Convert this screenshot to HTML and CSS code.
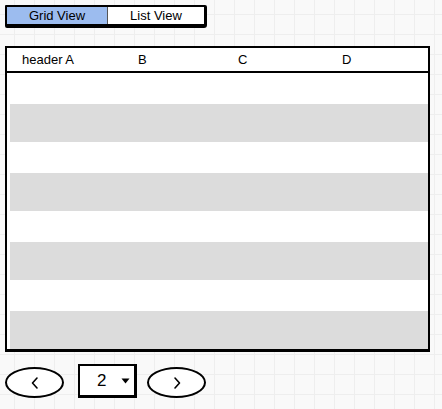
FILE: index.html
```html
<!DOCTYPE html>
<html>
<head>
<meta charset="utf-8">
<link rel="stylesheet" href="styles.css">
</head>
<body>
<div class="page">
  <div class="tabs">
    <div class="tab active">Grid View</div>
    <div class="tab">List View</div>
  </div>

  <div class="table">
    <div class="thead">
      <div class="th">header A</div>
      <div class="th">B</div>
      <div class="th">C</div>
      <div class="th">D</div>
    </div>
    <div class="tbody">
      <div class="row"></div>
      <div class="row alt"></div>
      <div class="row"></div>
      <div class="row alt"></div>
      <div class="row"></div>
      <div class="row alt"></div>
      <div class="row"></div>
      <div class="row alt"></div>
    </div>
  </div>

  <div class="pager">
    <div class="pill">
      <svg width="10" height="14" viewBox="0 0 10 14"><polyline points="7,2 2.5,7 7,12" fill="none" stroke="#000" stroke-width="1.6" stroke-linecap="round" stroke-linejoin="round"/></svg>
    </div>
    <div class="select">
      <span class="num">2</span>
      <svg width="9" height="6" viewBox="0 0 9 6"><polygon points="0.5,0.5 8.5,0.5 4.5,5.5" fill="#000"/></svg>
    </div>
    <div class="pill">
      <svg width="10" height="14" viewBox="0 0 10 14"><polyline points="3,2 7.5,7 3,12" fill="none" stroke="#000" stroke-width="1.6" stroke-linecap="round" stroke-linejoin="round"/></svg>
    </div>
  </div>
</div>
</body>
</html>
```
FILE: styles.css
```css
html {
  background-color: #f9f9f9;
  background-image:
    linear-gradient(to right, #eeeeee 1px, transparent 1px),
    linear-gradient(to bottom, #eeeeee 1px, transparent 1px);
  background-size: 20px 20px;
  background-position: 14px 14px;
}
body {
  margin: 0;
  font-family: "Liberation Sans", Arial, sans-serif;
  font-size: 13px;
  color: #000;
}
.page {
  padding: 5px 0 0 5px;
}
.tabs {
  display: flex;
  width: 197px;
  height: 17px;
  border: 2px solid #000;
  border-right-width: 3px;
  border-bottom-width: 4px;
  border-radius: 1px 2px 3px 2px;
  background: #fff;
}
.tab {
  display: flex;
  align-items: center;
  justify-content: center;
  line-height: 1;
}
.tab.active {
  width: 100px;
  background: #9cbcef;
  border-right: 1px solid #555;
}
.tab:last-child {
  flex: 1;
}
.table {
  margin-top: 18px;
  width: 421px;
  border: 2px solid #000;
  border-bottom-width: 3px;
  background: #fff;
}
.thead {
  display: grid;
  grid-template-columns: 116px 100px 104px 1fr;
  height: 23px;
  align-items: center;
  border-bottom: 2px solid #000;
}
.th {
  padding-left: 15px;
}
.row {
  height: 31px;
}
.row.alt {
  height: 38px;
  margin-left: 3px;
  background: #dcdcdc;
}
.pager {
  display: flex;
  align-items: flex-end;
  margin-top: 12px;
}
.pill {
  width: 55px;
  height: 27px;
  border: 2px solid #000;
  border-radius: 50%;
  background: #fff;
  display: flex;
  align-items: center;
  justify-content: center;
}
.select {
  margin: 0 10px 0 14px;
  width: 54px;
  height: 29px;
  border: 2px solid #000;
  border-right-width: 3px;
  border-bottom-width: 3px;
  background: #fff;
  display: flex;
  align-items: center;
  padding-left: 0;
  box-sizing: content-box;
}
.num {
  font-size: 17px;
  line-height: 1;
  margin-left: 17px;
  margin-right: 15px;
}
```
